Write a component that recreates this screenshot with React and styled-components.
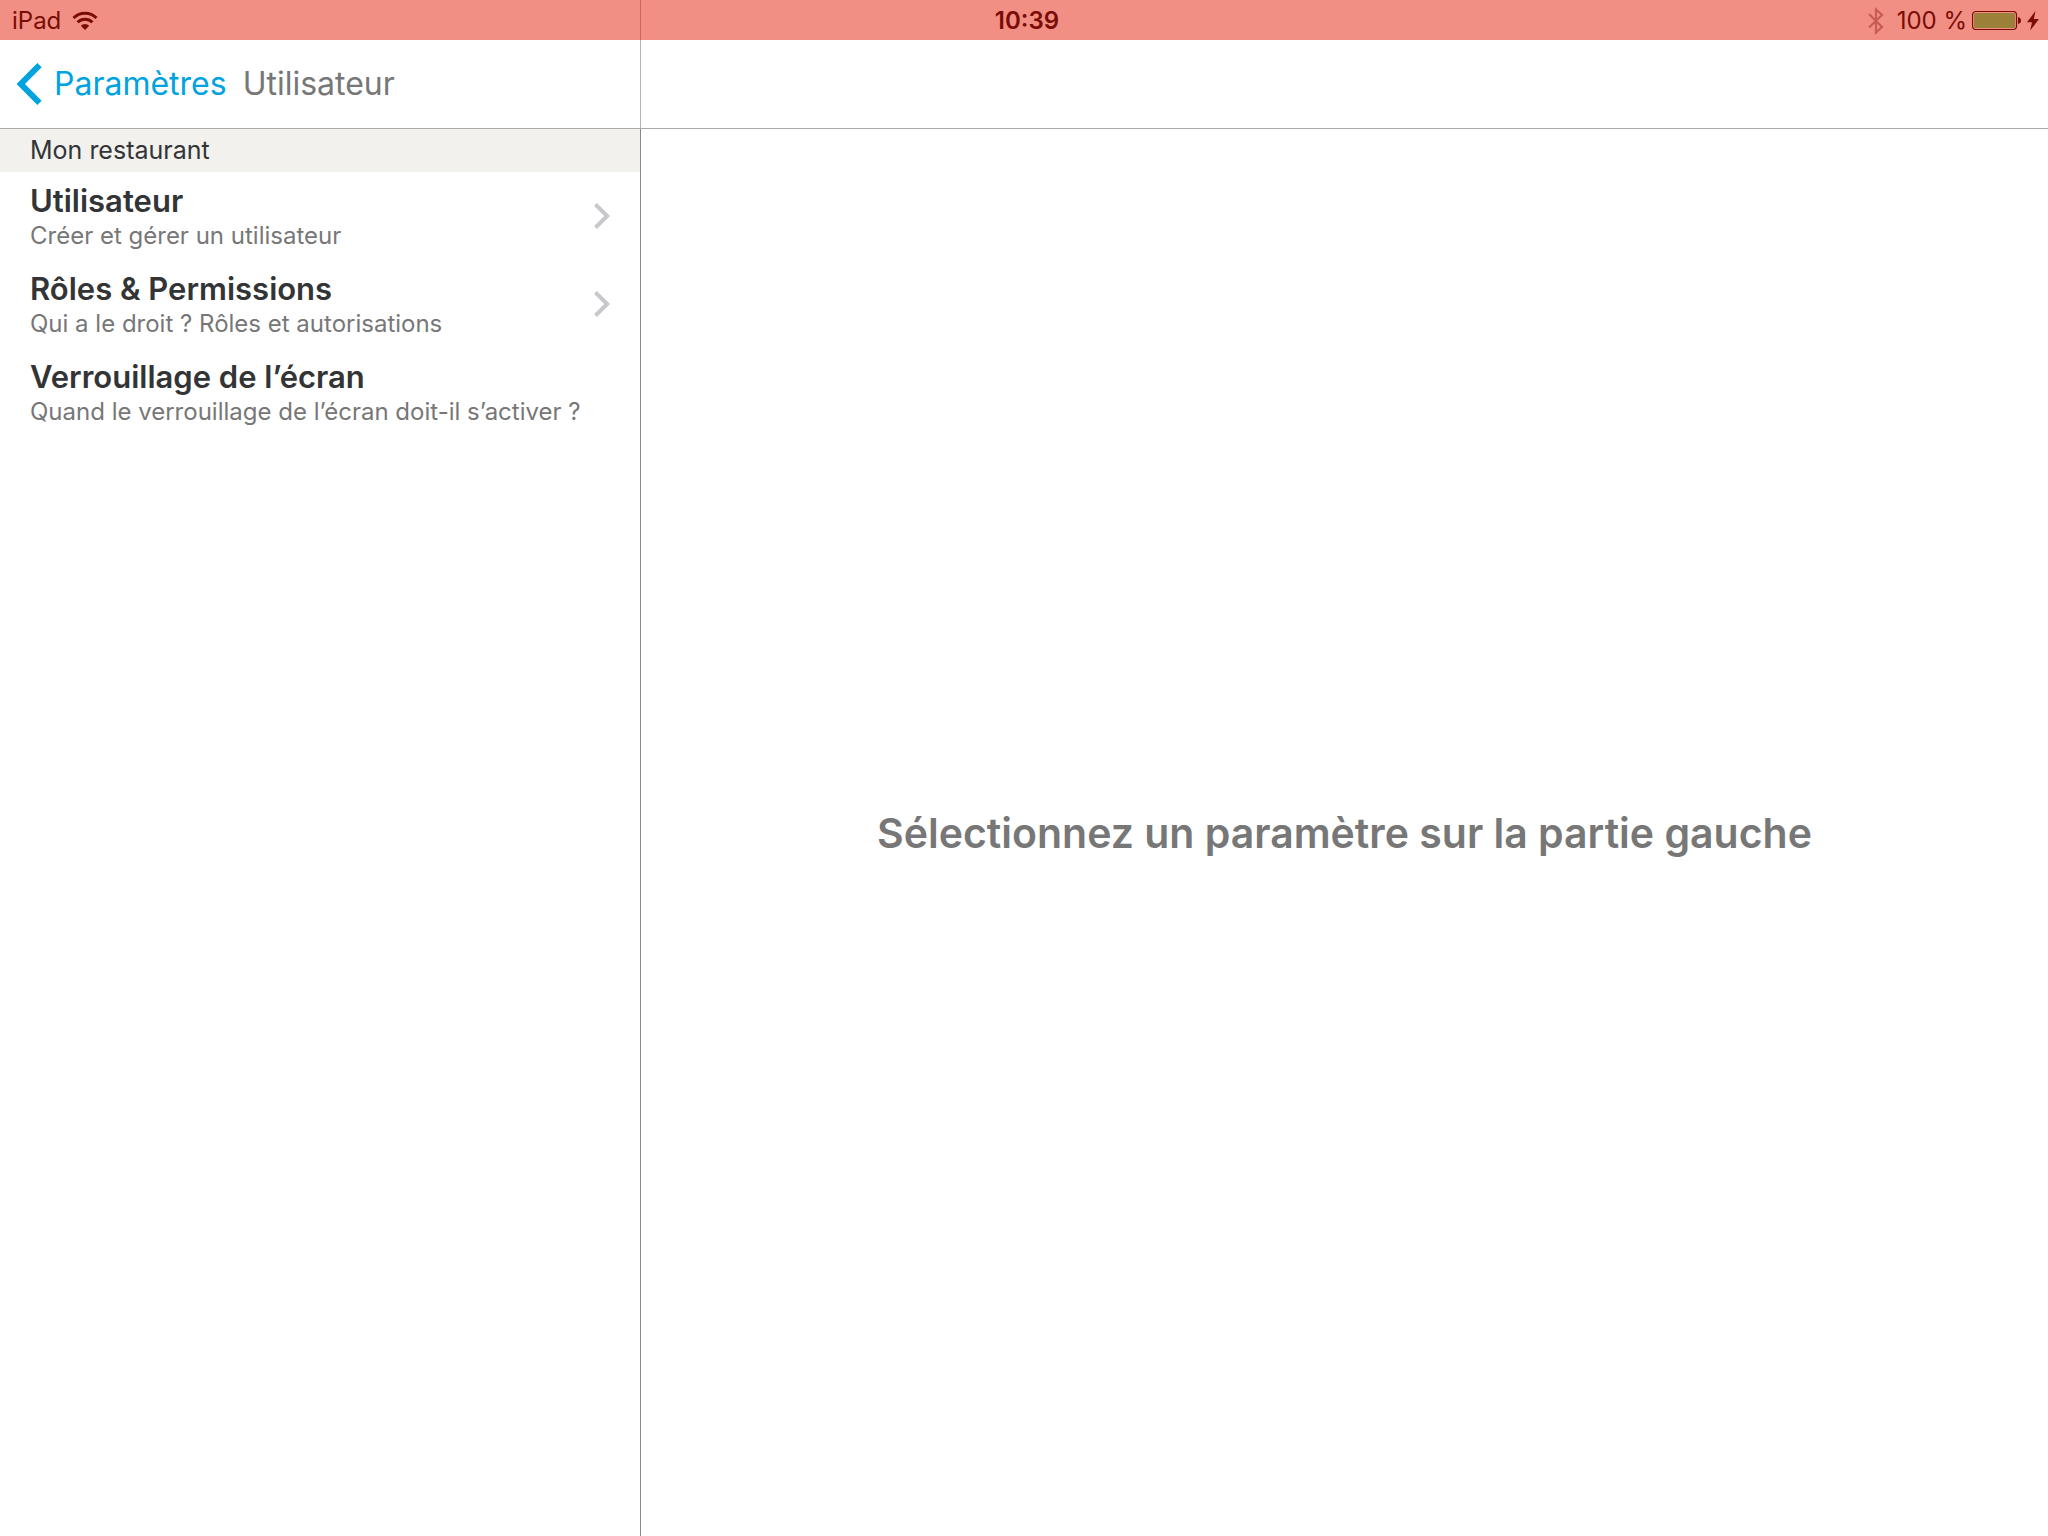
import React from 'react'
import styled, { createGlobalStyle } from 'styled-components'

const GlobalStyle = createGlobalStyle`
  * {
    box-sizing: border-box;
  }

  body {
    margin: 0;
    background: #fff;
    font-family: Inter, "Liberation Sans", sans-serif;
  }

  a {
    color: inherit;
    text-decoration: none;
  }
`

const Page = styled.div`
  min-height: 100vh;
  display: flex;
  flex-direction: column;
`

const StatusBar = styled.div`
  position: relative;
  height: 40px;
  padding: 2px 9px 0 12px;
  display: grid;
  grid-template-columns: 1fr auto 1fr;
  align-items: center;
  background: #f28f84;
  color: #7a0c06;
  font-size: 24px;
  line-height: 38px;

  &::after {
    content: '';
    position: absolute;
    top: 0;
    bottom: 0;
    left: 31.25%;
    width: 1px;
    background: #d0665f;
  }
`

const StatusGroup = styled.div`
  display: flex;
  align-items: center;
  justify-content: ${props => props.$end ? 'flex-end' : 'flex-start'};
  gap: ${props => props.$end ? '5px' : '11px'};
`

const Clock = styled.time`
  padding-left: 3px;
  font-weight: 600;
`

const BatteryLevel = styled.span`
  margin-left: 8px;
`

const Header = styled.header`
  height: 89px;
  display: flex;
  border-bottom: 1px solid #aaa;
`

const HeaderLeft = styled.nav`
  width: calc(31.25% + 1px);
  padding-left: 16px;
  display: flex;
  align-items: center;
  gap: 16px;
  border-right: 1px solid #b5b5b5;
  font-size: 32px;
  line-height: 40px;
`

const BackLink = styled.a`
  display: flex;
  align-items: center;
  gap: 12px;
  color: #00a3e0;
`

const HeaderTitle = styled.h1`
  margin: 0;
  color: #777;
  font-size: 32px;
  font-weight: 400;
`

const Content = styled.div`
  flex: 1;
  display: flex;
`

const Sidebar = styled.aside`
  width: calc(31.25% + 1px);
  border-right: 1px solid #8a8a8e;
`

const SectionTitle = styled.h2`
  margin: 0;
  padding: 0 30px;
  background: #f2f1ee;
  color: #333435;
  font-size: 25px;
  font-weight: 400;
  line-height: 43px;
`

const List = styled.ul`
  margin: 0;
  padding: 0;
  list-style: none;
`

const Row = styled.a`
  padding: 9px 30px;
  display: flex;
  align-items: center;
  justify-content: space-between;
`

const RowTitle = styled.div`
  color: #333435;
  font-size: 31px;
  font-weight: 600;
  line-height: 40px;
`

const RowText = styled.div`
  color: #777;
  font-size: 24px;
  line-height: 30px;
  white-space: nowrap;
`

const Detail = styled.main`
  flex: 1;
  display: flex;
  align-items: center;
  justify-content: center;
`

const Message = styled.p`
  margin: 0;
  color: #777;
  font-size: 41px;
  font-weight: 600;
  line-height: 50px;
`

const WifiIcon = () => (
  <svg width="26" height="20" viewBox="0 0 26 20" fill="none" stroke="currentColor" strokeWidth="3">
    <path d="M1.500 7a16.300 16.300 0 0 1 23 0" />
    <path d="M5.600 11.300a10.500 10.500 0 0 1 14.800 0" />
    <path d="M13 19l-4.200-4.300a6 6 0 0 1 8.400 0z" fill="currentColor" stroke="none" />
  </svg>
)

const BluetoothIcon = () => (
  <svg width="16" height="28" viewBox="0 0 16 28" fill="none" stroke="#c85b52" strokeWidth="2.200">
    <path d="M1 7l13 13-6 5.500V2.500L14 8 1 20.500" />
  </svg>
)

const BatteryIcon = () => (
  <svg width="50" height="20" viewBox="0 0 50 20">
    <rect x="0.500" y="0.500" width="44" height="18" rx="3.500" fill="none" stroke="currentColor" strokeWidth="1.200" />
    <rect x="2" y="2" width="41" height="15" rx="1.500" fill="#9a8038" />
    <path d="M46 6c4 0.500 4 6.500 0 7z" fill="currentColor" />
  </svg>
)

const BoltIcon = () => (
  <svg width="12" height="20" viewBox="0 0 12 20" fill="currentColor">
    <path d="M8.500 0L0 11.200h5L3.200 19.500 12 8H6.800z" />
  </svg>
)

const BackIcon = () => (
  <svg width="26" height="42" viewBox="0 0 26 42" fill="none" stroke="currentColor" strokeWidth="6">
    <path d="M23.500 2.200L4.800 21l18.700 18.800" />
  </svg>
)

const Chevron = () => (
  <svg width="16" height="26" viewBox="0 0 16 26" fill="none" stroke="#c7c7cc" strokeWidth="4">
    <path d="M1.500 1.500L13.200 13l-11.700 11.500" />
  </svg>
)

const rows = [
  { id: 'users', title: 'Utilisateur', text: 'Créer et gérer un utilisateur', chevron: true },
  { id: 'roles', title: 'Rôles & Permissions', text: 'Qui a le droit ? Rôles et autorisations', chevron: true },
  { id: 'lock', title: 'Verrouillage de l’écran', text: 'Quand le verrouillage de l’écran doit-il s’activer ?' }
]

const App = () => (
  <Page>
    <GlobalStyle />
    <StatusBar>
      <StatusGroup>
        <span>iPad</span>
        <WifiIcon />
      </StatusGroup>
      <Clock>10:39</Clock>
      <StatusGroup $end>
        <BluetoothIcon />
        <BatteryLevel>100 %</BatteryLevel>
        <BatteryIcon />
        <BoltIcon />
      </StatusGroup>
    </StatusBar>
    <Header>
      <HeaderLeft>
        <BackLink href="#parametres">
          <BackIcon />
          Paramètres
        </BackLink>
        <HeaderTitle>Utilisateur</HeaderTitle>
      </HeaderLeft>
    </Header>
    <Content>
      <Sidebar>
        <SectionTitle>Mon restaurant</SectionTitle>
        <List>
          {rows.map(row => (
            <li key={row.id}>
              <Row href={`#${row.id}`}>
                <div>
                  <RowTitle>{row.title}</RowTitle>
                  <RowText>{row.text}</RowText>
                </div>
                {row.chevron && <Chevron />}
              </Row>
            </li>
          ))}
        </List>
      </Sidebar>
      <Detail>
        <Message>Sélectionnez un paramètre sur la partie gauche</Message>
      </Detail>
    </Content>
  </Page>
)

export default App
